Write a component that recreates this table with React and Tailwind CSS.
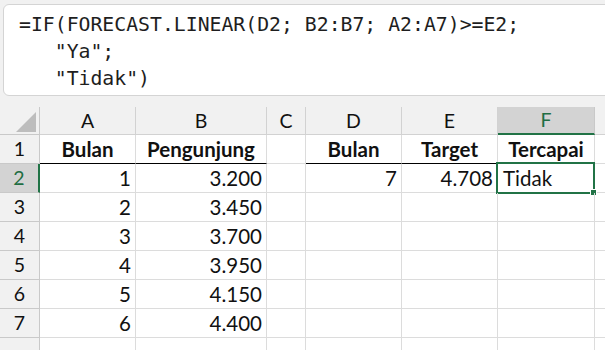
import React from 'react';

const colW = ['w-[40px]', 'w-[96px]', 'w-[131px]', 'w-[39px]', 'w-[96px]', 'w-[96px]', 'w-[97px]', 'w-[40px]'];
const letters = ['', 'A', 'B', 'C', 'D', 'E', 'F', ''];

// each row: [A, B, C, D, E, F]
const rows = [
  [{ v: 'Bulan', b: true }, { v: 'Pengunjung', b: true }, null, { v: 'Bulan', b: true }, { v: 'Target', b: true }, { v: 'Tercapai', b: true }],
  [{ v: '1', r: true }, { v: '3.200', r: true }, null, { v: '7', r: true }, { v: '4.708', r: true }, { v: 'Tidak' }],
  [{ v: '2', r: true }, { v: '3.450', r: true }, null, null, null, null],
  [{ v: '3', r: true }, { v: '3.700', r: true }, null, null, null, null],
  [{ v: '4', r: true }, { v: '3.950', r: true }, null, null, null, null],
  [{ v: '5', r: true }, { v: '4.150', r: true }, null, null, null, null],
  [{ v: '6', r: true }, { v: '4.400', r: true }, null, null, null, null],
  [null, null, null, null, null, null],
];

const Cell = ({ cell, ci, ri }) => {
  const underline = ri === 0 && (ci === 0 || ci === 1 || ci === 3 || ci === 4 || ci === 5);
  const selected = ri === 1 && ci === 5;
  let align = 'justify-start pl-[5px]';
  if (cell && cell.b) align = 'justify-center';
  if (cell && cell.r) align = 'justify-end pr-[4px]';
  return (
    <div
      className={`${colW[ci + 1]} relative h-full shrink-0 flex items-end pb-[3px] border-r border-[#dcdcdc] ${
        underline ? 'border-b border-b-black' : 'border-b'
      } ${align} ${cell && cell.b ? 'font-bold' : ''}`}
    >
      {cell ? <span className="leading-none pb-[1px]">{cell.v}</span> : null}
      {selected && (
        <div className="absolute -left-[2px] -top-[2px] w-[99px] h-[32px] border-2 border-[#217346]">
          <div className="absolute -right-[4px] -bottom-[4px] w-[7px] h-[7px] bg-[#217346] border border-white" />
        </div>
      )}
    </div>
  );
};

export default function App() {
  return (
    <div className="w-[605px] h-[350px] overflow-hidden bg-[#f1f1f1] font-['Lato',sans-serif] text-[20.5px] text-[#111]">
      {/* formula bar */}
      <div className="ml-[3px] mt-[4px] h-[92px] w-[640px] bg-white border border-[#d4d4d4] rounded-[6px] pl-[15px] pt-[6px] font-['DejaVu_Sans_Mono',monospace] text-[19.8px] leading-[27px] text-[#1e1e1e] whitespace-pre">
        <div>=IF(FORECAST.LINEAR(D2; B2:B7; A2:A7)&gt;=E2;</div>
        <div>{'   "Ya";'}</div>
        <div>{'   "Tidak")'}</div>
      </div>

      {/* grid */}
      <div className="mt-[11px] bg-white">
        {/* column headers */}
        <div className="flex h-[28px] bg-[#f1f1f1] text-[19.5px]">
          {letters.map((l, i) =>
            i === 0 ? (
              <div key={i} className={`${colW[0]} shrink-0 relative border-r border-b border-[#c9c9c9]`}>
                <svg className="absolute left-[16px] top-[5px]" width="20" height="20" viewBox="0 0 20 20">
                  <polygon points="20,0 20,20 0,20" fill="#bdbdbd" />
                </svg>
              </div>
            ) : (
              <div
                key={i}
                className={`${colW[i]} shrink-0 flex items-center justify-center ${
                  l === 'F'
                    ? 'bg-[#d3d3d3] text-[#1f6e43] border-b-2 border-b-[#217346] border-r border-r-[#c9c9c9]'
                    : 'border-r border-b border-[#d2d2d2]'
                }`}
              >
                {l}
              </div>
            )
          )}
        </div>

        {rows.map((row, ri) => (
          <div key={ri} className="flex h-[29px]">
            <div
              className={`${colW[0]} shrink-0 flex items-center justify-center border-b text-[19.5px] ${
                ri === 1
                  ? 'bg-[#d3d3d3] text-[#1f6e43] border-r-2 border-r-[#217346] border-b-[#c9c9c9]'
                  : 'bg-[#f1f1f1] border-r border-[#c9c9c9]'
              }`}
            >
              {ri < 7 ? ri + 1 : ''}
            </div>
            {row.map((cell, ci) => (
              <Cell key={ci} cell={cell} ci={ci} ri={ri} />
            ))}
            <div className="flex-1 border-b border-[#dcdcdc]" />
          </div>
        ))}
      </div>
    </div>
  );
}
